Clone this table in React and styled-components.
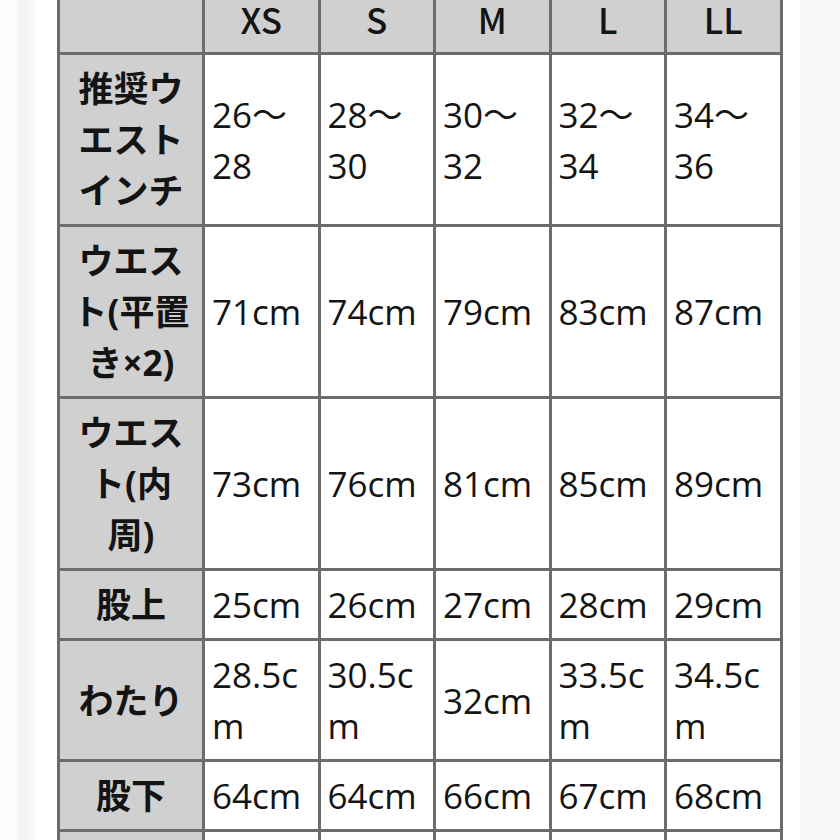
import styled, { createGlobalStyle } from "styled-components";

const GlobalStyle = createGlobalStyle`
  html, body {
    margin: 0;
    padding: 0;
  }
  body {
    overflow: hidden;
    background: linear-gradient(
      to right,
      #fcfcfc 0px,
      #fcfcfc 17px,
      #f4f4f4 17px,
      #f4f4f4 28px,
      #f9f9f9 28px,
      #f9f9f9 36px,
      #ffffff 36px,
      #ffffff 800px,
      #f8f8f8 800px
    );
    font-family: "Open Sans", "Noto Sans CJK JP", sans-serif;
    color: #141414;
  }
`;

const sizes = ["XS", "S", "M", "L", "LL"];

const rows = [
  { label: "推奨ウエストインチ", values: ["26〜28", "28〜30", "30〜32", "32〜34", "34〜36"] },
  { label: "ウエスト(平置き×2)", values: ["71cm", "74cm", "79cm", "83cm", "87cm"] },
  { label: "ウエスト(内周)", values: ["73cm", "76cm", "81cm", "85cm", "89cm"] },
  { label: "股上", values: ["25cm", "26cm", "27cm", "28cm", "29cm"] },
  { label: "わたり", values: ["28.5cm", "30.5cm", "32cm", "33.5cm", "34.5cm"] },
  { label: "股下", values: ["64cm", "64cm", "66cm", "67cm", "68cm"] },
  { label: "\u00a0", values: ["\u00a0", "\u00a0", "\u00a0", "\u00a0", "\u00a0"] },
];

function App() {
  return (
    <>
      <GlobalStyle />
      <Page>
        <SizeTable>
          <colgroup>
            <col style={{ width: 145 }} />
            {sizes.map((s) => (
              <col key={s} style={{ width: 115.5 }} />
            ))}
          </colgroup>
          <thead>
            <tr>
              <HeadCell></HeadCell>
              {sizes.map((s) => (
                <HeadCell key={s}>{s}</HeadCell>
              ))}
            </tr>
          </thead>
          <tbody>
            {rows.map((row, i) => (
              <tr key={i}>
                <LabelCell>{row.label}</LabelCell>
                {row.values.map((v, j) => (
                  <ValueCell key={j}>{v}</ValueCell>
                ))}
              </tr>
            ))}
          </tbody>
        </SizeTable>
      </Page>
    </>
  );
}

export default App;

const Page = styled.div`
  width: 840px;
  height: 840px;
  overflow: hidden;
`;

const SizeTable = styled.table`
  margin: -18px 0 0 57px;
  width: 722px;
  table-layout: fixed;
  border-collapse: collapse;
  font-size: 35px;
  line-height: 51px;
`;

const Cell = styled.td`
  border: 3px solid #6c6c6c;
  padding: 8px 7px;
  vertical-align: middle;
  overflow-wrap: anywhere;
`;

const HeadCell = styled(Cell).attrs({ as: "th" })`
  background: #d0d0d0;
  font-family: "Noto Sans CJK JP", sans-serif;
  font-weight: 500;
  text-align: center;
`;

const LabelCell = styled(Cell).attrs({ as: "th" })`
  background: #d0d0d0;
  font-weight: 700;
  text-align: center;
`;

const ValueCell = styled(Cell)`
  background: #ffffff;
  text-align: left;
`;
